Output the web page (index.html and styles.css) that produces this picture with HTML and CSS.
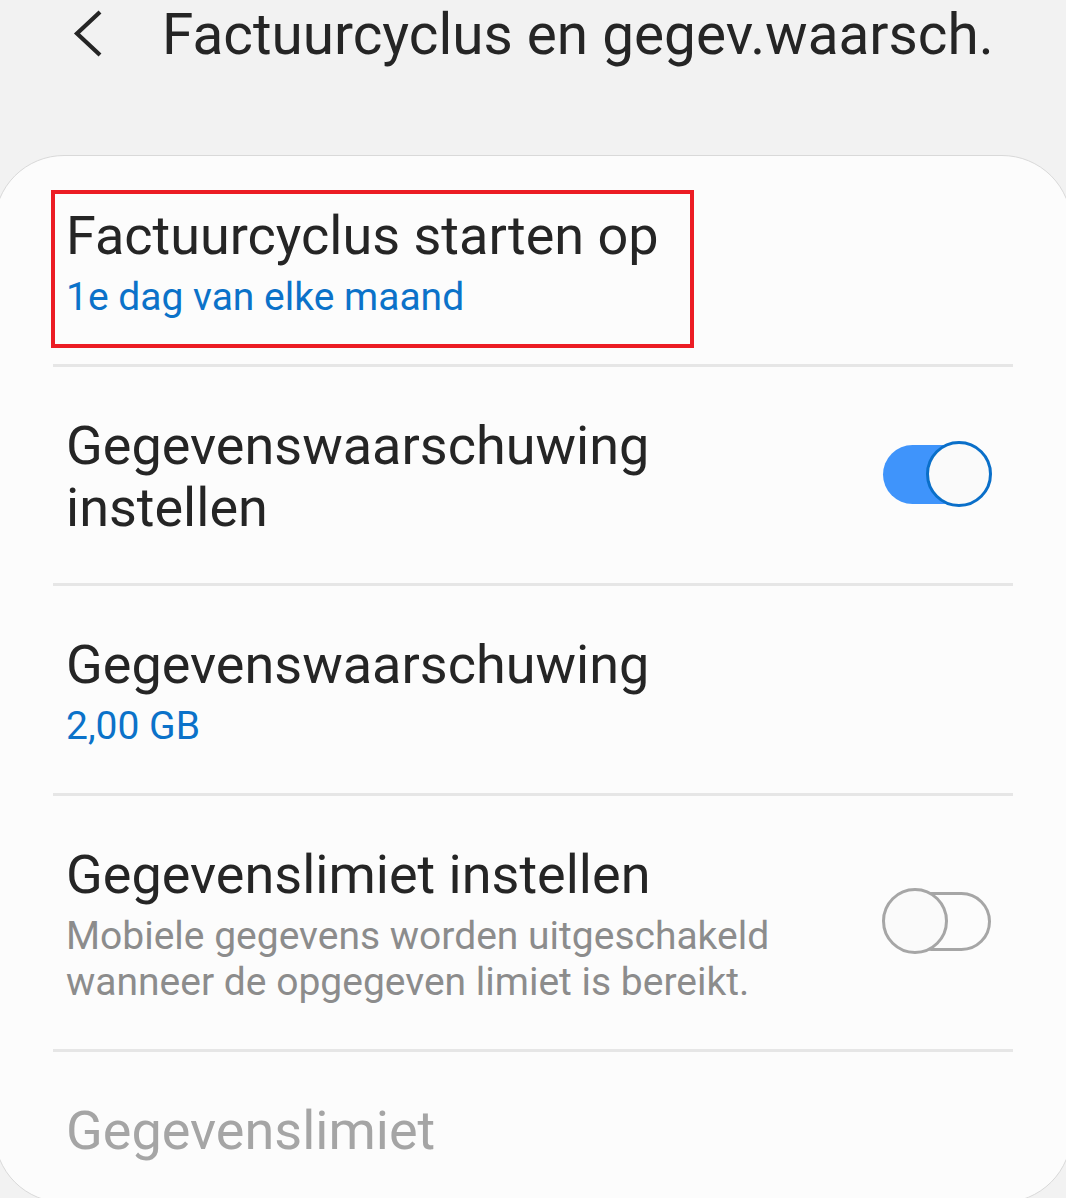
FILE: index.html
```html
<!DOCTYPE html>
<html lang="nl">
<head>
<meta charset="utf-8">
<title>Factuurcyclus en gegev.waarsch.</title>
<link rel="stylesheet" href="styles.css">
</head>
<body>
<div class="screen">
  <header class="appbar">
    <svg class="back" width="30" height="48" viewBox="0 0 30 48" aria-hidden="true">
      <polyline points="27,2 4,23.5 27,45" fill="none" stroke="#252525" stroke-width="4.2" stroke-linecap="butt" stroke-linejoin="miter"/>
    </svg>
    <h1 class="title">Factuurcyclus en gegev.waarsch.</h1>
  </header>
  <main class="card">
    <section class="item item-first">
      <div class="text">
        <div class="item-title">Factuurcyclus starten op</div>
        <div class="item-sub accent">1e dag van elke maand</div>
      </div>
      <div class="highlight"></div>
    </section>
    <section class="item">
      <div class="text">
        <div class="item-title">Gegevenswaarschuwing<br>instellen</div>
      </div>
      <div class="switch on"><span class="knob"></span></div>
    </section>
    <section class="item">
      <div class="text">
        <div class="item-title">Gegevenswaarschuwing</div>
        <div class="item-sub accent">2,00 GB</div>
      </div>
    </section>
    <section class="item">
      <div class="text">
        <div class="item-title">Gegevenslimiet instellen</div>
        <div class="item-sub muted">Mobiele gegevens worden uitgeschakeld<br>wanneer de opgegeven limiet is bereikt.</div>
      </div>
      <div class="switch off"><span class="knob"></span></div>
    </section>
    <section class="item item-last">
      <div class="text">
        <div class="item-title disabled">Gegevenslimiet</div>
      </div>
    </section>
  </main>
</div>
</body>
</html>
```
FILE: styles.css
```css
html, body {
  margin: 0;
  padding: 0;
  background: #f2f2f2;
}
body {
  font-family: Roboto, "Noto Sans", "Liberation Sans", sans-serif;
  color: #252525;
}
.screen {
  width: 1066px;
  height: 1198px;
  overflow: hidden;
  background: #f2f2f2;
}
.appbar {
  height: 155px;
  box-sizing: border-box;
  display: flex;
  align-items: flex-start;
  padding: 0 0 0 73px;
}
.back {
  display: block;
  margin-top: 10px;
  flex: none;
}
.title {
  margin: 0 0 0 59px;
  padding-top: 4px;
  font-size: 56.7px;
  line-height: 62px;
  font-weight: 400;
  color: #252525;
  white-space: nowrap;
}
.card {
  margin: 0 -6px;
  height: 1048px;
  background: #fcfcfc;
  border: 1px solid #d9d9d9;
  border-radius: 70px;
  box-sizing: border-box;
  padding: 0 58px;
}
.item {
  position: relative;
  display: flex;
  align-items: center;
  padding: 48px 13px 44px;
  border-top: 3px solid #e6e6e6;
}
.item-first {
  border-top: none;
  padding-top: 49px;
}
.text {
  flex: 1;
}
.item-title {
  font-size: 54px;
  line-height: 62px;
  color: #252525;
}
.item-title.disabled {
  color: #a5a5a5;
}
.item-sub {
  margin-top: 7px;
  font-size: 39px;
  line-height: 46px;
}
.accent {
  color: #0b72c9;
}
.muted {
  color: #8c8c8c;
}
.highlight {
  position: absolute;
  left: -2px;
  top: 34px;
  width: 643px;
  height: 158px;
  box-sizing: border-box;
  border: 4px solid #ec1c24;
  pointer-events: none;
}
.switch {
  position: relative;
  flex: none;
  width: 110px;
  height: 66px;
  margin: 0 8px 7px 0;
}
.switch::before {
  content: "";
  position: absolute;
  top: 4px;
  height: 59px;
  border-radius: 30px;
  box-sizing: border-box;
}
.switch.on::before {
  left: 1px;
  width: 90px;
  background: #3f94fb;
}
.switch.off::before {
  left: 20px;
  width: 89px;
  border: 3.5px solid #a6a6a6;
  background: #fcfcfc;
}
.knob {
  position: absolute;
  top: 0;
  width: 66px;
  height: 66px;
  border-radius: 50%;
  box-sizing: border-box;
  background: #fafafa;
}
.switch.on .knob {
  right: 0;
  border: 3.5px solid #0a6fc9;
}
.switch.off .knob {
  left: 0;
  border: 3.5px solid #a6a6a6;
}
```
